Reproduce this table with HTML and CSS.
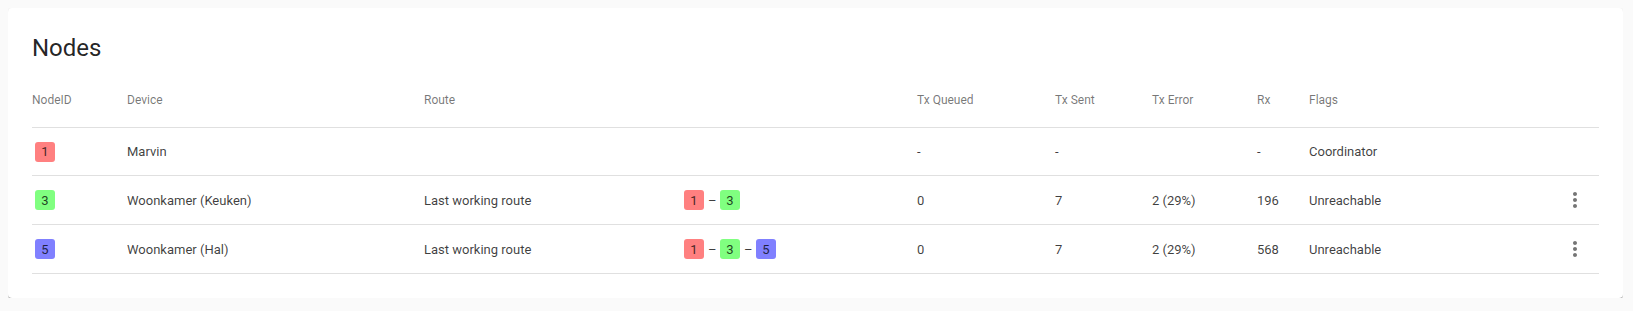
FILE: index.html
```html
<!DOCTYPE html>
<html lang="en">
<head>
<meta charset="utf-8">
<title>Nodes</title>
<link rel="stylesheet" href="styles.css">
</head>
<body>
<div class="card">
  <h2 class="title">Nodes</h2>
  <div class="table">
    <div class="row head">
      <div class="cell">NodeID</div>
      <div class="cell">Device</div>
      <div class="cell">Route</div>
      <div class="cell"></div>
      <div class="cell">Tx Queued</div>
      <div class="cell">Tx Sent</div>
      <div class="cell">Tx Error</div>
      <div class="cell">Rx</div>
      <div class="cell">Flags</div>
      <div class="cell"></div>
    </div>
    <div class="row">
      <div class="cell"><span class="badge red">1</span></div>
      <div class="cell">Marvin</div>
      <div class="cell"></div>
      <div class="cell"></div>
      <div class="cell">-</div>
      <div class="cell">-</div>
      <div class="cell"></div>
      <div class="cell">-</div>
      <div class="cell">Coordinator</div>
      <div class="cell"></div>
    </div>
    <div class="row">
      <div class="cell"><span class="badge green">3</span></div>
      <div class="cell">Woonkamer (Keuken)</div>
      <div class="cell">Last working route</div>
      <div class="cell"><div class="route"><span class="badge red">1</span><span class="dash">–</span><span class="badge green">3</span></div></div>
      <div class="cell">0</div>
      <div class="cell">7</div>
      <div class="cell">2 (29%)</div>
      <div class="cell">196</div>
      <div class="cell">Unreachable</div>
      <div class="cell action"><button class="menu" aria-label="More"><svg viewBox="0 0 24 24" width="24" height="24"><path d="M12 8c1.1 0 2-.9 2-2s-.9-2-2-2-2 .9-2 2 .9 2 2 2zm0 2c-1.1 0-2 .9-2 2s.9 2 2 2 2-.9 2-2-.9-2-2-2zm0 6c-1.1 0-2 .9-2 2s.9 2 2 2 2-.9 2-2-.9-2-2-2z"/></svg></button></div>
    </div>
    <div class="row">
      <div class="cell"><span class="badge blue">5</span></div>
      <div class="cell">Woonkamer (Hal)</div>
      <div class="cell">Last working route</div>
      <div class="cell"><div class="route"><span class="badge red">1</span><span class="dash">–</span><span class="badge green">3</span><span class="dash">–</span><span class="badge blue">5</span></div></div>
      <div class="cell">0</div>
      <div class="cell">7</div>
      <div class="cell">2 (29%)</div>
      <div class="cell">568</div>
      <div class="cell">Unreachable</div>
      <div class="cell action"><button class="menu" aria-label="More"><svg viewBox="0 0 24 24" width="24" height="24"><path d="M12 8c1.1 0 2-.9 2-2s-.9-2-2-2-2 .9-2 2 .9 2 2 2zm0 2c-1.1 0-2 .9-2 2s.9 2 2 2 2-.9 2-2-.9-2-2-2zm0 6c-1.1 0-2 .9-2 2s.9 2 2 2 2-.9 2-2-.9-2-2-2z"/></svg></button></div>
    </div>
  </div>
</div>
</body>
</html>
```
FILE: styles.css
```css
html, body {
  background: #fafafa;
}
body {
  margin: 8px 10px 8px 8px;
  font-family: Roboto, "Liberation Sans", sans-serif;
  color: rgba(0, 0, 0, 0.76);
}
.card {
  background: #fff;
  border-radius: 4px;
  padding: 24px;
  box-shadow: 0 2px 1px -1px rgba(0,0,0,.25), 0 1px 1px 0 rgba(0,0,0,.16), 0 1px 3px 0 rgba(0,0,0,.14);
}
.title {
  margin: 0 0 8px;
  font-size: 24px;
  line-height: 32px;
  font-weight: 400;
  color: rgba(0, 0, 0, 0.87);
}
.row {
  display: grid;
  grid-template-columns: 95px 297px 260px 233px 138px 97px 105px 52px 1fr 48px;
  align-items: center;
  box-sizing: border-box;
  min-height: 48px;
  border-bottom: 1px solid rgba(0, 0, 0, 0.12);
  font-size: 13px;
}
.row.head {
  min-height: 56px;
  font-size: 12px;
  color: rgba(0, 0, 0, 0.54);
}
.cell {
  white-space: nowrap;
}
.badge {
  display: inline-flex;
  align-items: center;
  justify-content: center;
  width: 20px;
  height: 20px;
  border-radius: 3px;
  font-size: 13px;
  color: rgba(0, 0, 0, 0.75);
  vertical-align: middle;
}
.cell > .badge {
  margin-left: 3px;
}
.red { background: #ff8080; }
.green { background: #80ff80; }
.blue { background: #8080ff; }
.route {
  display: flex;
  align-items: center;
  gap: 4px;
}
.dash {
  width: 8px;
  text-align: center;
}
.action {
  display: flex;
  justify-content: center;
}
.menu {
  width: 48px;
  height: 48px;
  border: 0;
  padding: 0;
  background: transparent;
  display: flex;
  align-items: center;
  justify-content: center;
}
.menu svg {
  fill: rgba(0, 0, 0, 0.54);
}
```
